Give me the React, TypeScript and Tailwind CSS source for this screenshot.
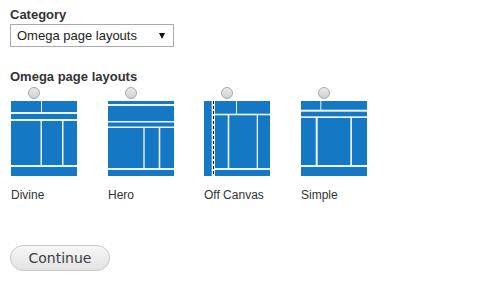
import React from 'react'

const BLUE = '#1578c5'

type Box = [number, number, number, number]

const layouts: { name: string; gap: string; boxes: Box[]; offCanvas?: boolean }[] = [
  {
    name: 'Divine',
    gap: 'ml-0',
    boxes: [
      [0, 0, 30, 11],
      [31, 0, 35, 11],
      [0, 13, 66, 5],
      [0, 20, 29.5, 44],
      [31, 20, 20, 44],
      [52.5, 20, 13.5, 44],
      [0, 66, 66, 9],
    ],
  },
  {
    name: 'Hero',
    gap: 'ml-[31px]',
    boxes: [
      [0, 0, 66, 3],
      [0, 5, 66, 15],
      [0, 21.5, 66, 4],
      [0, 27, 35.3, 40],
      [36.7, 27, 14, 40],
      [52.3, 27, 13.7, 40],
      [0, 69, 66, 6],
    ],
  },
  {
    name: 'Off Canvas',
    gap: 'ml-[30px]',
    offCanvas: true,
    boxes: [
      [0, 0, 7.7, 75],
      [11, 0, 21, 12.7],
      [33, 0, 33, 12.7],
      [11, 14.3, 12.7, 52.7],
      [25.3, 14.3, 27.4, 52.7],
      [54, 14.3, 12, 52.7],
      [11, 69, 55, 6],
    ],
  },
  {
    name: 'Simple',
    gap: 'ml-[31px]',
    boxes: [
      [0, 0, 19.3, 8.7],
      [20.3, 0, 45.7, 8.7],
      [0, 10.7, 66, 4.6],
      [0, 17, 14.7, 47],
      [16.7, 17, 32.6, 47],
      [51, 17, 15, 47],
      [0, 66, 66, 9],
    ],
  },
]

function Thumb({ boxes, offCanvas }: { boxes: Box[]; offCanvas?: boolean }) {
  return (
    <svg width="66" height="75" viewBox="0 0 66 75" className="block">
      <rect x="0" y="0" width="66" height="75" fill="#eef3f8" />
      {boxes.map(([x, y, w, h], i) => (
        <rect key={i} x={x} y={y} width={w} height={h} fill={BLUE} />
      ))}
      {offCanvas && (
        <line x1="9.5" y1="0" x2="9.5" y2="75" stroke="#111" strokeWidth="1" strokeDasharray="3 2" />
      )}
    </svg>
  )
}

export default function App() {
  return (
    <div className="w-[485px] h-[285px] bg-white px-[10px] pt-[7px] text-[#333]" style={{ fontFamily: '"Liberation Sans", Arial, sans-serif' }}>
      <div className="text-[13px] font-bold leading-[15px]">Category</div>
      <div className="mt-[2px] w-[164px] h-[23px] border border-[#aaa] bg-white flex items-center justify-between pl-[6px] pr-[8px] text-[13px] text-[#222]">
        <span>Omega page layouts</span>
        <svg width="6" height="6" viewBox="0 0 6 6">
          <path d="M0 0 L6 0 L3 6 Z" fill="#111" />
        </svg>
      </div>

      <div className="mt-[22px] text-[13px] font-bold leading-[15px]">Omega page layouts</div>

      <div className="mt-[3px] flex pl-px">
        {layouts.map((l) => (
          <div key={l.name} className={`w-[66px] ${l.gap}`}>
            <div className="ml-[17px] w-[12px] h-[12px] rounded-full border border-[#a8a8a8] bg-gradient-to-b from-[#eaeaea] to-[#d0d0d0]" />
            <div className="mt-[2px]">
              <Thumb boxes={l.boxes} offCanvas={l.offCanvas} />
            </div>
            <div className="mt-[12px] text-[12px] leading-[14px] text-[#333]">{l.name}</div>
          </div>
        ))}
      </div>

      <button
        className="mt-[43px] w-[100px] h-[26px] rounded-full border border-[#c8c8c8] bg-gradient-to-b from-[#f7f7f7] to-[#e3e3e3] text-[14px] text-[#3a3f44] leading-none"
        style={{ fontFamily: '"DejaVu Sans", Verdana, sans-serif' }}
      >
        Continue
      </button>
    </div>
  )
}
